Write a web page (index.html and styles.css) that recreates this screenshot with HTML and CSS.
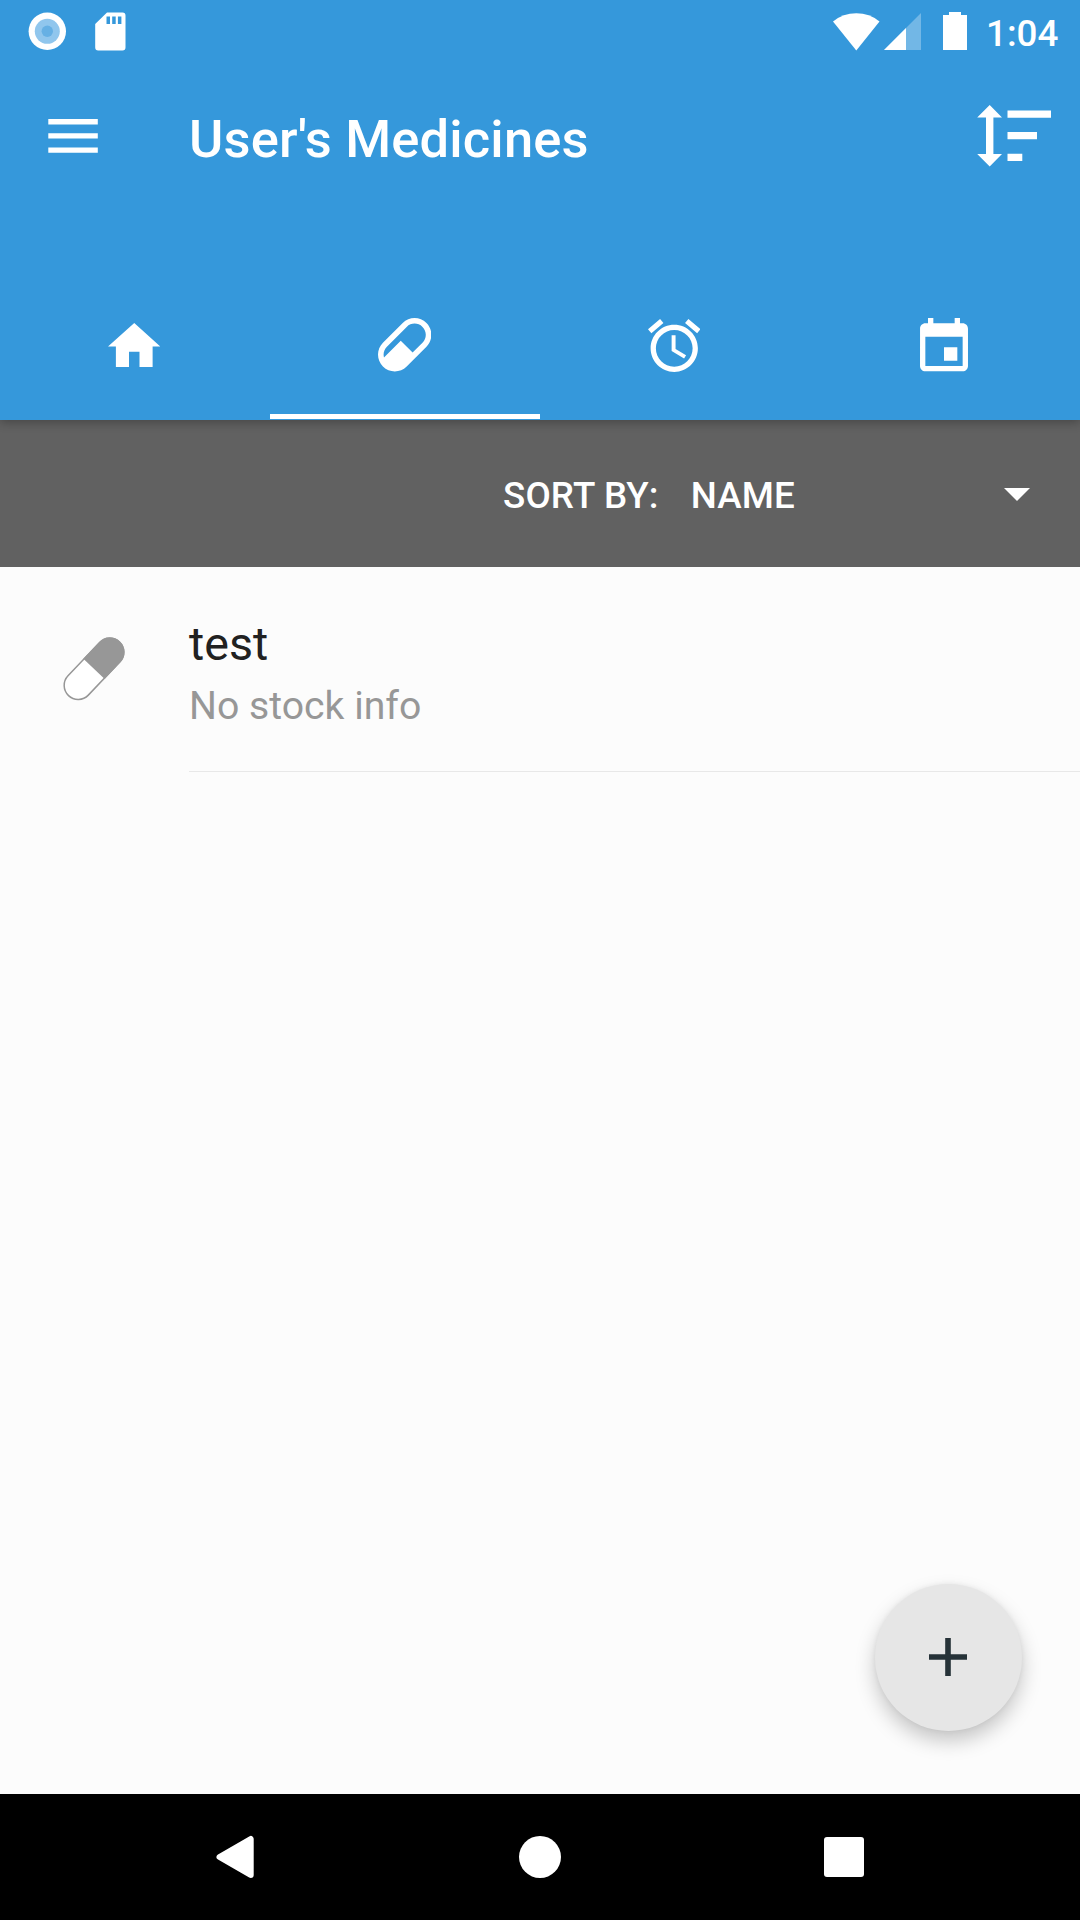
FILE: index.html
```html
<!DOCTYPE html>
<html lang="en">
<head>
<meta charset="utf-8">
<title>User's Medicines</title>
<link rel="stylesheet" href="styles.css">
</head>
<body>
<div class="screen">
  <header class="header">
    <div class="status">
      <svg class="st-sync" width="38" height="38" viewBox="0 0 38 38"><circle cx="19.300" cy="19.300" r="18.700" fill="#fff"/><circle cx="19.300" cy="19.300" r="12.500" fill="#90c6ed"/><circle cx="19.300" cy="19.300" r="5.700" fill="#66b0e4"/></svg>
      <svg class="st-sd" width="31" height="39" viewBox="0 -.5 31 39"><path fill="#fff" fill-rule="evenodd" d="M12 0H27.500a3 3 0 0 1 3 3V35a3 3 0 0 1-3 3H3.200a3 3 0 0 1-3-3V11.500zM11.500 4V11.500H15V4zM17.200 4V11.500H20.700V4zM22.900 4V11.500H26.400V4z"/></svg>
      <span class="spacer"></span>
      <svg class="st-wifi" width="47" height="38" viewBox="0 0 47 38"><path fill="#fff" d="M0 8.500Q10 .3 23.300.3T46.500 8.500L23.300 37.500z"/></svg>
      <svg class="st-signal" width="37" height="37" viewBox="0 0 37 37"><path fill="#fff" fill-opacity=".3" d="M37 0V37H0z"/><path fill="#fff" d="M22 15V37H0z"/></svg>
      <svg class="st-battery" width="24" height="38" viewBox="0 0 24 38"><path fill="#fff" d="M6 0H18V3H24V38H0V3H6z"/></svg>
      <span class="clock">1:04</span>
    </div>
    <div class="toolbar">
      <svg class="menu" width="50" height="34" viewBox="0 0 50 34"><path fill="#fff" d="M.3 0H49.800V5.400H.3zM.3 14.200H49.800V19.600H.3zM.3 28.400H49.800V33.800H.3z"/></svg>
      <h1 class="title">User's Medicines</h1>
      <svg class="sort" width="74" height="62" viewBox="0 0 74 62"><path fill="#fff" d="M12.700 0L25 12.600H16.400V49H25L12.700 61.500.2 49H9V12.600H.2zM30.500 5.500H74V12.700H30.500zM30.500 27H60V34.300H30.500zM30.500 48.800H45.300V56H30.500z"/></svg>
    </div>
    <nav class="tabs">
      <a class="tab"><svg width="52.500" height="44.600" viewBox="2 3 20 17"><path fill="#fff" d="M10 20v-6h4v6h5v-8h3L12 3 2 12h3v8z"/></svg></a>
      <a class="tab active"><svg width="53.400" height="53.400" viewBox="2.460 2.460 19.080 19.080"><path fill="#fff" d="M4.220,11.290L11.290,4.220C13.640,1.880 17.430,1.880 19.780,4.220C22.120,6.560 22.120,10.360 19.780,12.710L12.710,19.780C10.360,22.120 6.560,22.120 4.220,19.780C1.880,17.430 1.880,13.640 4.220,11.290M5.640,12.710C4.590,13.750 4.240,15.240 4.600,16.570L10.590,10.590L14.830,14.830L18.360,11.290C19.930,9.730 19.930,7.200 18.360,5.640C16.800,4.070 14.270,4.070 12.710,5.640L5.640,12.710Z"/></svg></a>
      <a class="tab"><svg width="52.500" height="53" viewBox="2 1.860 20 20.140"><path fill="#fff" d="M22 5.720l-4.600-3.860-1.290 1.530 4.600 3.860L22 5.720zM7.880 3.390L6.600 1.860 2 5.710l1.290 1.530 4.590-3.850zM12.500 8H11v6l4.750 2.850.75-1.230-4-2.370V8zM12 4c-4.970 0-9 4.030-9 9s4.020 9 9 9c4.970 0 9-4.030 9-9s-4.030-9-9-9zm0 16c-3.870 0-7-3.130-7-7s3.130-7 7-7 7 3.130 7 7-3.130 7-7 7z"/></svg></a>
      <a class="tab"><svg width="48" height="53.300" viewBox="3 1 18 20"><path fill="#fff" d="M17 12h-5v5h5v-5zM16 1v2H8V1H6v2H5c-1.110 0-1.990.9-1.990 2L3 19c0 1.100.89 2 2 2h14c1.100 0 2-.9 2-2V5c0-1.100-.9-2-2-2h-1V1h-2zm3 18H5V8h14v11z"/></svg></a>
    </nav>
  </header>
  <div class="sortbar">
    <span class="sort-label">SORT BY:</span>
    <span class="sort-value">NAME</span>
    <svg class="caret" width="26" height="13" viewBox="0 0 26 13"><path fill="#fff" d="M0 0H26L13 13z"/></svg>
  </div>
  <main class="list">
    <div class="item">
      <svg class="item-icon" width="62" height="64" viewBox="0 0 62 64"><g transform="translate(31 31.800) rotate(43.500)"><rect x="-14" y="-37" width="28" height="74" rx="14" fill="#fff" stroke="#979797" stroke-width="1.500"/><path fill="#979797" d="M-14.700 0V-23a14.700 14.700 0 0 1 29.400 0V0z"/></g></svg>
      <div class="item-text">
        <div class="name">test</div>
        <div class="stock">No stock info</div>
      </div>
    </div>
    <button class="fab" aria-label="Add"><svg width="38" height="38" viewBox="0 0 38 38"><path fill="#263238" d="M16.200 0H21.800V16.200H38V21.800H21.800V38H16.200V21.800H0V16.200H16.200z"/></svg></button>
  </main>
  <footer class="navbar">
    <svg width="42" height="44" viewBox="0 0 42 44"><path fill="#fff" stroke="#fff" stroke-width="6" stroke-linejoin="round" d="M5.500 22L36.700 4V40z"/></svg>
    <svg width="42" height="42" viewBox="0 0 42 42"><circle cx="21" cy="21" r="21" fill="#fff"/></svg>
    <svg width="40" height="40" viewBox="0 0 40 40"><rect width="40" height="40" rx="3" fill="#fff"/></svg>
  </footer>
</div>
</body>
</html>
```
FILE: styles.css
```css
* { box-sizing: border-box; margin: 0; padding: 0; }
body { font-family: Roboto, sans-serif; background: #fcfcfc; }
svg { display: block; flex: none; }

.screen { width: 1080px; height: 1920px; display: flex; flex-direction: column; overflow: hidden; }

.header { position: relative; z-index: 1; height: 420px; background: #3598db; display: flex; flex-direction: column; box-shadow: 0 2px 10px rgba(0, 0, 0, .3); }
.status { height: 63px; padding: 12px 22px 0 28px; display: flex; align-items: flex-start; }
.st-sd { margin-left: 29px; }
.spacer { flex: 1; }
.st-wifi { margin: 1px 4px 0 0; }
.st-signal { margin: 1px 22px 0 0; }
.clock { width: 72px; margin-left: 19px; font-size: 36.75px; font-weight: 500; line-height: 43px; color: #fff; white-space: nowrap; }
.st-wifi, .st-signal, .st-battery { flex: none; }

.toolbar { height: 147px; padding: 0 29px 0 48px; display: flex; align-items: center; }
.menu, .sort { margin-bottom: 1px; }
.title { flex: 1; margin-left: 91px; padding-top: 4px; font-size: 52.5px; font-weight: 500; line-height: 62px; letter-spacing: .15px; color: #fff; }

.tabs { margin-top: auto; height: 144px; display: grid; grid-template-columns: repeat(4, 1fr); }
.tab { display: flex; align-items: center; justify-content: center; padding-right: 2px; border-bottom: 5px solid transparent; margin-bottom: 1px; }
.tab.active { padding-right: 1px; border-bottom-color: #fff; }

.sortbar { height: 147px; background: #616161; display: flex; align-items: center; padding: 2px 50px 0 503px; color: #fff; font-size: 36.75px; font-weight: 500; letter-spacing: .15px; }
.sort-label, .sort-value { padding-top: 2px; }
.sort-value { margin-left: 32px; flex: 1; }

.list { flex: 1; position: relative; background: #fcfcfc; }
.item { display: flex; height: 205px; padding-left: 63px; }
.item-icon { margin-top: 70px; }
.item-text { flex: 1; margin-left: 64px; padding-top: 48px; border-bottom: 1px solid #e8e8e8; }
.name { font-size: 46.6px; line-height: 58px; color: #212121; }
.stock { margin-top: 9px; font-size: 39.2px; line-height: 48px; color: #979797; }

.fab { position: absolute; right: 58px; bottom: 63px; width: 147px; height: 147px; border: 0; border-radius: 50%; background: #e6e6e6; display: flex; align-items: center; justify-content: center; padding: 0 1px 1px 0; box-shadow: 0 10px 20px rgba(0, 0, 0, .22), 0 0 5px rgba(0, 0, 0, .06); }

.navbar { height: 126px; background: #000; display: flex; align-items: center; justify-content: space-between; padding: 0 216px 0 214px; }
```
